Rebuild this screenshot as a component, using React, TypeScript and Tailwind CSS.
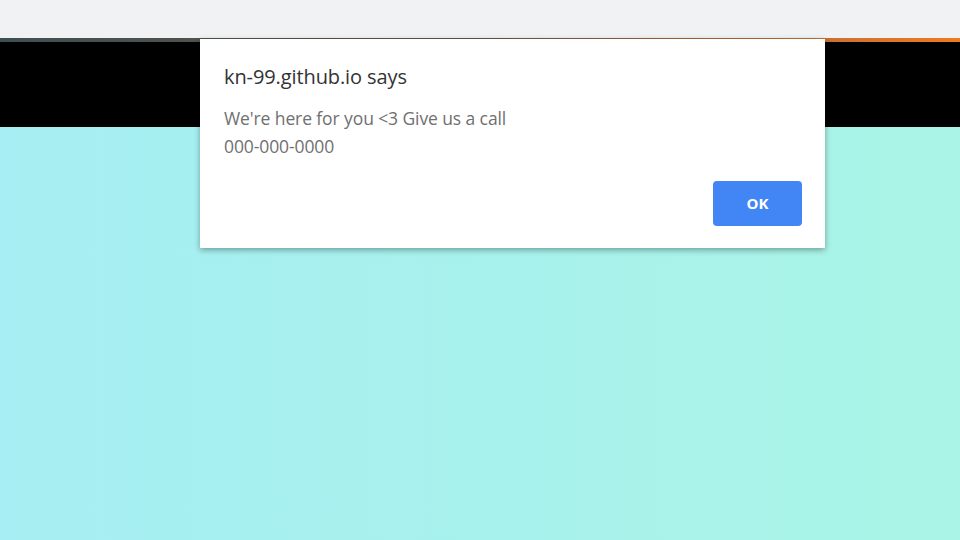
export default function App() {
  return (
    <div className="relative w-[960px] h-[540px] overflow-hidden flex flex-col bg-[#a9f1ec]" style={{ fontFamily: '"Open Sans", "Noto Sans", sans-serif' }}>
      {/* Browser chrome strip */}
      <div className="h-[38px] bg-[#f1f2f4] shrink-0" />
      <div className="h-[4px] bg-gradient-to-r from-[#3d5052] via-[#6a5546] to-[#f07a1c] shrink-0" />
      {/* Page header band */}
      <div className="h-[85px] bg-black shrink-0" />
      {/* Page body */}
      <div className="flex-1 bg-gradient-to-r from-[#a6eef3] to-[#a9f4e6]" />

      {/* Alert dialog */}
      <div className="absolute left-[200px] top-[39px] w-[625px] h-[209px] bg-white shadow-[0_2px_6px_rgba(0,0,0,0.35)] flex flex-col pl-6 pr-[23px] pt-[24px] pb-[22px]">
        <h1 className="text-[20px] leading-[28px] text-[#333] tracking-[-0.1px]">kn-99.github.io says</h1>
        <div className="mt-[13px] text-[17.5px] leading-[28px] text-[#707070] tracking-[-0.1px]">
          <p>We're here for you &lt;3 Give us a call</p>
          <p>000-000-0000</p>
        </div>
        <div className="mt-auto flex justify-end">
          <button className="w-[89px] h-[45px] rounded-[4px] bg-[#4285f4] text-white font-bold text-[15px]">
            OK
          </button>
        </div>
      </div>
    </div>
  );
}
